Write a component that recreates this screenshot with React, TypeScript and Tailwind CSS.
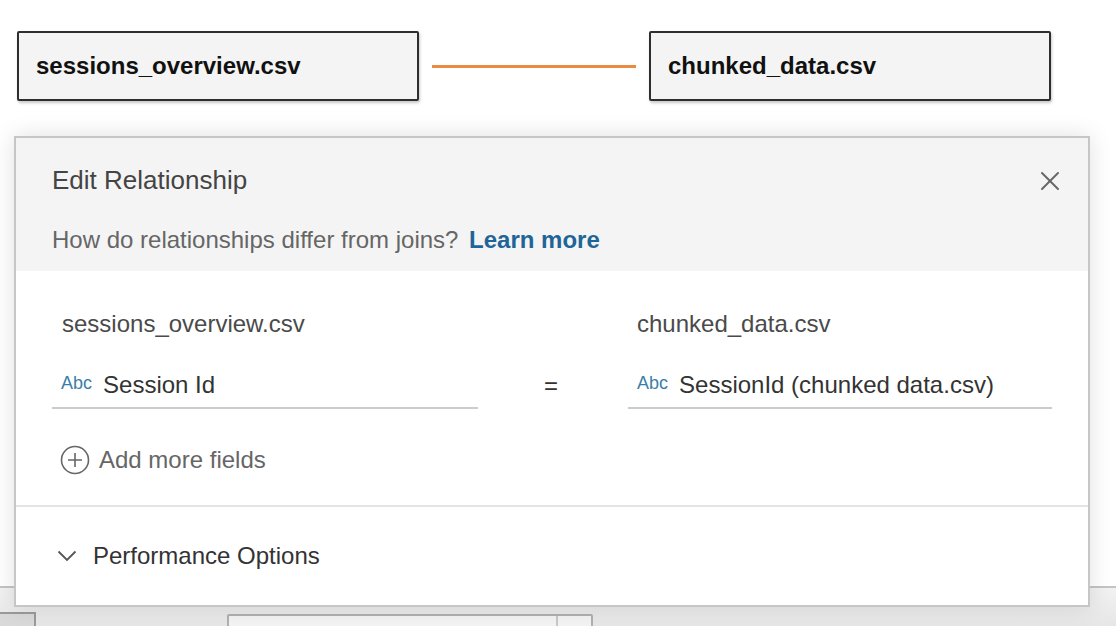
import { X } from 'lucide-react'

function TableBox({ name }: { name: string }) {
  return (
    <div className="w-[402px] h-[70px] border-2 border-[#2e2e2e] bg-[#f4f4f4] rounded-[2px] shadow-[1px_2px_3px_rgba(0,0,0,0.22)] flex items-center pl-[17px]">
      <span className="text-[24px] font-bold text-[#111]">{name}</span>
    </div>
  )
}

function FieldRow({ label }: { label: string }) {
  return (
    <div className="h-[47px] border-b-2 border-[#cccccc] flex items-center pl-[9px] gap-[11px]">
      <span className="text-[18px] text-[#3b7fa6] leading-none -mt-[3px]">Abc</span>
      <span className="text-[24px] text-[#333] leading-none">{label}</span>
    </div>
  )
}

function PlusCircle() {
  return (
    <svg width="30" height="30" viewBox="0 0 30 30" fill="none" stroke="#666" strokeWidth="1.6">
      <circle cx="15" cy="15" r="13.5" />
      <path d="M15 8v14M8 15h14" />
    </svg>
  )
}

function Chevron() {
  return (
    <svg width="20" height="12" viewBox="0 0 20 12" fill="none" stroke="#555" strokeWidth="1.8">
      <path d="M1.5 1.5 10 10l8.5-8.5" />
    </svg>
  )
}

export default function App() {
  return (
    <div
      className="relative w-[1116px] h-[626px] overflow-hidden bg-white"
      style={{ fontFamily: '"Liberation Sans", Arial, sans-serif' }}
    >
      {/* canvas with the two tables */}
      <div className="h-[586px] pt-[31px]">
        <div className="flex items-center pl-[17px]">
          <TableBox name="sessions_overview.csv" />
          <div className="w-[204px] h-[3px] bg-[#eb8a43] ml-[13px] mr-[13px]" />
          <TableBox name="chunked_data.csv" />
        </div>
      </div>

      {/* strip underneath */}
      <div className="h-[40px] border-t-2 border-[#c4c4c4] bg-gradient-to-b from-[#f2f2f2] to-[#e6e6e6] relative">
        <div className="absolute left-0 top-[24px] w-[36px] h-[20px] bg-[#d9d9d9] border-t-2 border-r-2 border-[#9a9a9a]" />
        <div className="absolute left-[227px] top-[26px] w-[366px] h-[20px] bg-[#f3f3f3] border-2 border-[#b0b0b0] rounded-t-[2px] flex justify-end">
          <div className="w-[35px] h-full border-l-2 border-[#c8c8c8]" />
        </div>
      </div>

      {/* edit relationship dialog */}
      <div className="absolute left-[14px] top-[136px] w-[1076px] h-[471px] border-2 border-[#c6c6c6] bg-white shadow-[0_0_22px_rgba(0,0,0,0.12)] flex flex-col">
        <div className="h-[133px] bg-[#f4f4f4] px-[36px] pt-[27px] relative">
          <div className="text-[26px] leading-[30px] text-[#444]">Edit Relationship</div>
          <div className="mt-[31px] text-[24px] leading-[28px] text-[#666]">
            How do relationships differ from joins?{' '}
            <span className="font-bold text-[#1f6598] ml-[4px]">Learn more</span>
          </div>
          <button className="absolute right-[22px] top-[27px] text-[#666]">
            <X size={32} strokeWidth={1.5} />
          </button>
        </div>

        <div className="px-[36px] pt-[39px] pb-[30px] border-b-2 border-[#e4e4e4]">
          <div className="grid grid-cols-[426px_150px_1fr]">
            <div>
              <div className="pl-[10px] text-[24px] leading-[28px] text-[#4a4a4a]">sessions_overview.csv</div>
              <div className="mt-[24px]">
                <FieldRow label="Session Id" />
              </div>
            </div>
            <div className="flex flex-col">
              <div className="h-[28px]" />
              <div className="mt-[24px] h-[47px] flex items-center justify-center pr-[4px] text-[24px] text-[#333]">=</div>
            </div>
            <div>
              <div className="pl-[9px] text-[24px] leading-[28px] text-[#4a4a4a]">chunked_data.csv</div>
              <div className="mt-[24px]">
                <FieldRow label="SessionId (chunked data.csv)" />
              </div>
            </div>
          </div>
          <div className="mt-[36px] h-[30px] pl-[8px] flex items-center gap-[9px]">
            <PlusCircle />
            <span className="text-[24px] text-[#666] leading-none">Add more fields</span>
          </div>
        </div>

        <div className="flex-1 flex items-center pl-[41px] gap-[16px]">
          <Chevron />
          <span className="text-[24px] text-[#333] leading-none">Performance Options</span>
        </div>
      </div>
    </div>
  )
}
